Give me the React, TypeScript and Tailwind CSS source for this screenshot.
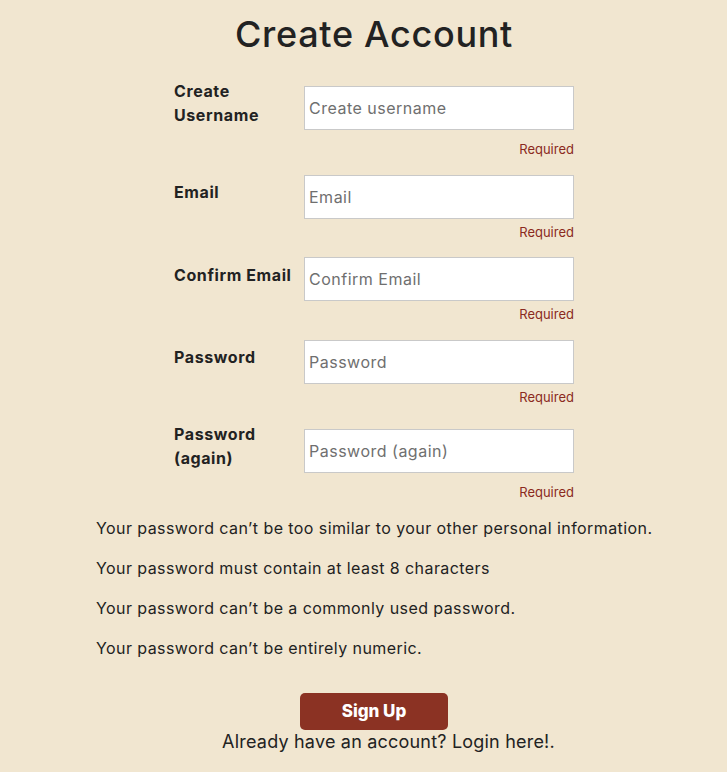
import React from 'react';

const fields = [
  { label: ['Create', 'Username'], placeholder: 'Create username' },
  { label: ['Email'], placeholder: 'Email' },
  { label: ['Confirm Email'], placeholder: 'Confirm Email' },
  { label: ['Password'], placeholder: 'Password' },
  { label: ['Password', '(again)'], placeholder: 'Password (again)' },
];

const rules = [
  'Your password can’t be too similar to your other personal information.',
  'Your password must contain at least 8 characters',
  'Your password can’t be a commonly used password.',
  'Your password can’t be entirely numeric.',
];

export default function App() {
  return (
    <div className="min-h-screen bg-[#f1e6d0] pl-[21px] text-[#222222] font-['Inter','Noto_Sans',sans-serif]">
      <h1 className="pt-[12px] text-center text-[36px] font-medium leading-[44px] tracking-[0.7px]">Create Account</h1>

      {/* Form rows */}
      <div className="mx-auto mt-[23px] w-[400px]">
        {fields.map((field) => (
          <div key={field.placeholder} className="mb-[17.5px]">
            <div className="flex items-center">
              <label className="w-[130px] whitespace-nowrap pb-[9px] text-[16px] font-bold leading-6 tracking-[0.6px]">
                {field.label.map((line) => (
                  <div key={line}>{line}</div>
                ))}
              </label>
              <input
                type="text"
                placeholder={field.placeholder}
                className="h-[44px] w-[270px] border border-[#c9c9c9] bg-white px-[4px] text-[16px] tracking-[0.5px] outline-none placeholder:text-[#6f6f6f]"
              />
            </div>
            <div className="mt-[5px] text-right text-[13px] leading-4 text-[#8b2a1e]">Required</div>
          </div>
        ))}
      </div>

      {/* Password rules */}
      <div className="mx-auto -mt-[1.5px] w-[556px]">
        {rules.map((rule) => (
          <p key={rule} className="mb-4 whitespace-nowrap text-[16px] leading-6 tracking-[0.42px]">
            {rule}
          </p>
        ))}
      </div>

      <div className="mt-[33px] flex flex-col items-center">
        <button className="h-[37px] w-[148px] rounded-[5px] bg-[#8b3223] text-[17px] font-extrabold text-white">
          Sign Up
        </button>
        <p className="pl-[29px] text-[18px] leading-6 tracking-[0.2px]">Already have an account? Login here!.</p>
      </div>
    </div>
  );
}
